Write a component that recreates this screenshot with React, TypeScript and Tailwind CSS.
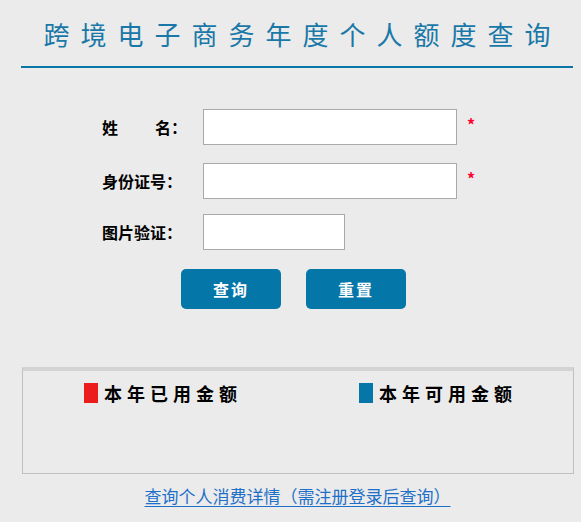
import React from "react";

const cjk = { fontFamily: '"Noto Sans CJK SC", "Noto Sans", sans-serif' };

const QuotaQuery = () => {
  return (
    <div className="min-h-[522px] w-[581px] bg-[#ebebeb] text-black" style={cjk}>
      <div className="mx-[21px] w-[552px]">
        <h1 className="pt-[16px] pb-[14px] text-center whitespace-nowrap text-[26px] leading-[36px] tracking-[11px] text-[#1a78a8] pl-[11px]">
          跨境电子商务年度个人额度查询
        </h1>
        <div className="h-[2px] bg-[#0a76a8]" />
      </div>

      <form className="mt-[41px]">
        <div className="flex items-center h-[36px]">
          <label className="w-[101px] ml-[102px] text-[16px] font-bold">
            <span>姓</span>
            <span className="ml-[37px]">名：</span>
          </label>
          <input className="w-[254px] h-[36px] bg-white border border-[#a9a9a9] outline-none" />
          <span className="ml-[10px] mb-[6px] text-[#ff0033] text-[16px] font-bold">*</span>
        </div>
        <div className="flex items-center h-[36px] mt-[18px]">
          <label className="w-[101px] ml-[102px] text-[16px] font-bold">身份证号：</label>
          <input className="w-[254px] h-[36px] bg-white border border-[#a9a9a9] outline-none" />
          <span className="ml-[10px] mb-[6px] text-[#ff0033] text-[16px] font-bold">*</span>
        </div>
        <div className="flex items-center h-[36px] mt-[15px]">
          <label className="w-[101px] ml-[102px] text-[16px] font-bold">图片验证：</label>
          <input className="w-[142px] h-[36px] bg-white border border-[#a9a9a9] outline-none" />
        </div>
        <div className="flex mt-[19px] ml-[181px] gap-[25px]">
          <button
            type="button"
            className="w-[100px] h-[40px] rounded-[5px] bg-[#0576a8] text-white text-[16px] font-bold tracking-[2px]"
          >
            查询
          </button>
          <button
            type="button"
            className="w-[100px] h-[40px] rounded-[5px] bg-[#0576a8] text-white text-[16px] font-bold tracking-[2px]"
          >
            重置
          </button>
        </div>
      </form>

      <div className="mt-[58px] mx-[22px] w-[552px] h-[107px] border border-[#c0c0c0] border-t-[4px] border-t-[#d3d3d3]">
        <div className="grid grid-cols-2 mt-[12px]">
          <div className="flex justify-center items-center">
            <span className="w-[14px] h-[20px] bg-[#ed1c1c]" />
            <span className="ml-[6px] text-[18px] leading-[20px] font-bold tracking-[5px] mr-[-5px]">本年已用金额</span>
          </div>
          <div className="flex justify-center items-center">
            <span className="w-[14px] h-[20px] bg-[#0576a8]" />
            <span className="ml-[6px] text-[18px] leading-[20px] font-bold tracking-[5px] mr-[-5px]">本年可用金额</span>
          </div>
        </div>
      </div>

      <div className="mt-[9px] pl-[14px] text-center">
        <a href="#" className="text-[17px] text-[#1e6fc8] underline underline-offset-[3px]">
          查询个人消费详情（需注册登录后查询）
        </a>
      </div>
    </div>
  );
};

export default function App() {
  return <QuotaQuery />;
}
